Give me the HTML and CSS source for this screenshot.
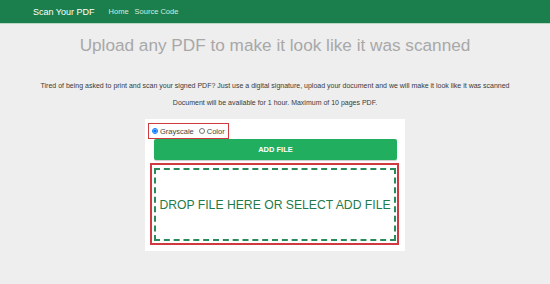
FILE: index.html
```html
<!DOCTYPE html>
<html>
<head>
<meta charset="utf-8">
<link rel="stylesheet" href="styles.css">
</head>
<body>
<nav class="nav">
  <span class="brand">Scan Your PDF</span>
  <a class="link" href="#">Home</a>
  <a class="link" href="#">Source Code</a>
</nav>
<main class="main">
  <h1 class="title">Upload any PDF to make it look like it was scanned</h1>
  <p class="lead">Tired of being asked to print and scan your signed PDF? Just use a digital signature, upload your document and we will make it look like it was scanned</p>
  <p class="lead second">Document will be available for 1 hour. Maximum of 10 pages PDF.</p>
  <div class="card">
    <div class="modes">
      <label class="opt"><input type="radio" name="m" checked> Grayscale</label>
      <label class="opt"><input type="radio" name="m"> Color</label>
    </div>
    <button class="add">ADD FILE</button>
    <div class="dropwrap">
      <div class="drop">DROP FILE HERE OR SELECT ADD FILE</div>
    </div>
  </div>
</main>
</body>
</html>
```
FILE: styles.css
```css
html, body {
  margin: 0;
  padding: 0;
  background: #eeeeee;
  font-family: "Liberation Sans", Arial, sans-serif;
}
.nav {
  height: 24px;
  background: #1a7f4c;
  display: flex;
  align-items: center;
  padding-left: 33px;
  border-bottom: 1px solid #b9d6c4;
  box-sizing: border-box;
}
.brand {
  color: #fff;
  font-size: 9px;
  margin-right: 14px;
}
.link {
  color: #d8eadf;
  font-size: 7.5px;
  text-decoration: none;
  margin-right: 6px;
}
.main {
  display: flex;
  flex-direction: column;
  align-items: center;
}
.title {
  margin: 11px 0 0;
  font-size: 17.2px;
  line-height: 20px;
  font-weight: normal;
  color: #a8a8a8;
}
.lead {
  margin: 26px 0 0;
  font-size: 7px;
  line-height: 10px;
  color: #3a3a3a;
}
.lead.second {
  margin-top: 7px;
}
.card {
  margin-top: 11px;
  width: 260px;
  height: 132px;
  background: #fff;
  box-sizing: border-box;
  padding: 4px 0 0 3px;
}
.modes {
  width: 81px;
  height: 16px;
  box-sizing: border-box;
  border: 1.5px solid #d0393f;
  display: flex;
  align-items: center;
  padding-left: 3px;
  font-size: 7.5px;
  color: #444;
}
.opt {
  display: flex;
  align-items: center;
  margin-right: 5px;
}
.opt input {
  width: 6px;
  height: 6px;
  margin: 0 2px 0 0;
}
.add {
  display: block;
  margin: 0 0 0 6px;
  width: 243px;
  height: 21px;
  border: none;
  border-radius: 2px;
  background: #22ae5f;
  color: #fff;
  font-family: "Liberation Sans", Arial, sans-serif;
  font-weight: bold;
  font-size: 7.5px;
  box-shadow: 0 1px 1px rgba(0,0,0,0.2);
}
.dropwrap {
  margin: 3px 0 0 2px;
  width: 249px;
  height: 82px;
  box-sizing: border-box;
  border: 2px solid #d0393f;
  padding: 3px 1px 2px 2px;
}
.drop {
  height: 100%;
  box-sizing: border-box;
  border: 2px dashed #2a8a5a;
  display: flex;
  align-items: center;
  justify-content: center;
  color: #1f7a4c;
  font-size: 12.2px;
  white-space: nowrap;
}
```
